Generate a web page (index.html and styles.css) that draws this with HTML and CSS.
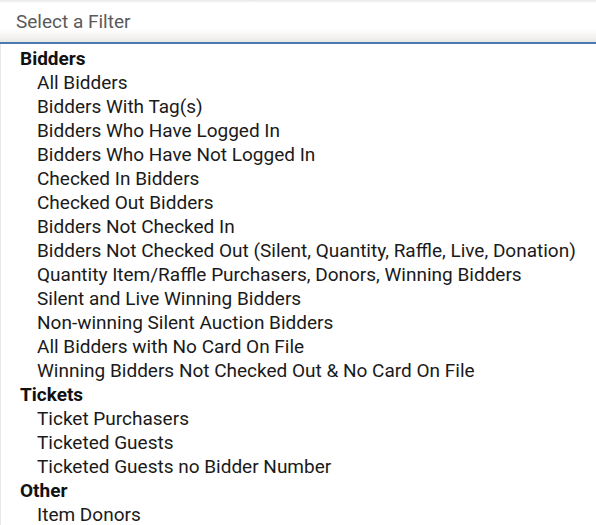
FILE: index.html
```html
<!DOCTYPE html>
<html>
<head>
<meta charset="utf-8">
<link rel="stylesheet" href="styles.css">
</head>
<body>
<div class="select">
  <div class="input">Select a Filter</div>
  <div class="menu">
    <div class="group">Bidders</div>
    <div class="item">All Bidders</div>
    <div class="item">Bidders With Tag(s)</div>
    <div class="item">Bidders Who Have Logged In</div>
    <div class="item">Bidders Who Have Not Logged In</div>
    <div class="item">Checked In Bidders</div>
    <div class="item">Checked Out Bidders</div>
    <div class="item">Bidders Not Checked In</div>
    <div class="item">Bidders Not Checked Out (Silent, Quantity, Raffle, Live, Donation)</div>
    <div class="item">Quantity Item/Raffle Purchasers, Donors, Winning Bidders</div>
    <div class="item">Silent and Live Winning Bidders</div>
    <div class="item">Non-winning Silent Auction Bidders</div>
    <div class="item">All Bidders with No Card On File</div>
    <div class="item">Winning Bidders Not Checked Out &amp; No Card On File</div>
    <div class="group">Tickets</div>
    <div class="item">Ticket Purchasers</div>
    <div class="item">Ticketed Guests</div>
    <div class="item">Ticketed Guests no Bidder Number</div>
    <div class="group">Other</div>
    <div class="item">Item Donors</div>
  </div>
</div>
</body>
</html>
```
FILE: styles.css
```css
html, body {
  margin: 0;
  padding: 0;
  background: #fff;
}
body {
  font-family: Roboto, "Liberation Sans", sans-serif;
  width: 596px;
  height: 525px;
  overflow: hidden;
}
.select {
  display: flex;
  flex-direction: column;
}
.input {
  height: 44px;
  box-sizing: border-box;
  padding-left: 16px;
  display: flex;
  align-items: center;
  font-size: 19px;
  color: #5a5a5a;
  background: linear-gradient(to bottom, #e6e6e6 0px, #fff 3px, #fff 29px, #f6f4f3 36px, #e4e4e4 44px);
  border-bottom: 2px solid #4a79b0;
}
.menu {
  border-left: 1px solid #e8e8e8;
  padding-top: 3px;
}
.group {
  height: 24px;
  line-height: 24px;
  padding-left: 19px;
  font-size: 19px;
  font-weight: bold;
  color: #111;
}
.item {
  height: 24px;
  line-height: 24px;
  padding-left: 36px;
  font-size: 19px;
  color: #1a1a1a;
  white-space: nowrap;
}
```
